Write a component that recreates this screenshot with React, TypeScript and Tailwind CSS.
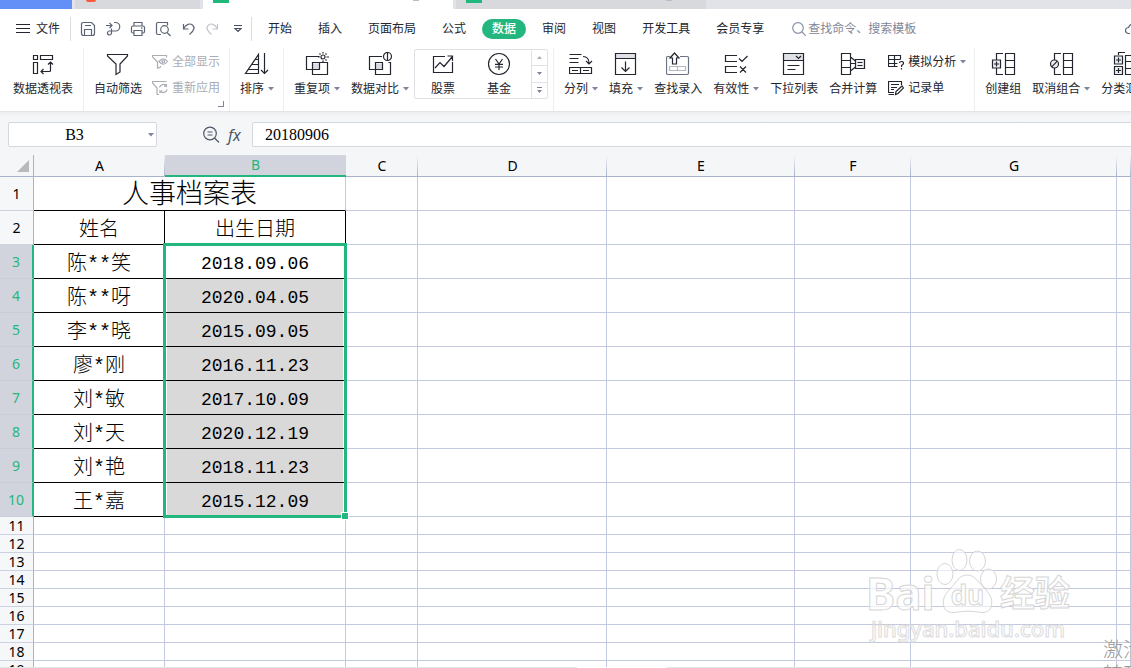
import { ReactNode } from "react";
import clsx from "clsx";

const Svg = ({ w, h, className, children }: { w: number; h: number; className?: string; children: ReactNode }) => (
    <svg
        width={w}
        height={h}
        viewBox={`0 0 ${w} ${h}`}
        fill="none"
        stroke="currentColor"
        strokeWidth="1.2"
        className={clsx("shrink-0", className)}
        aria-hidden="true"
    >
        {children}
    </svg>
);

const Caret = () => (
    <svg width="6" height="4" viewBox="0 0 6 4" className="ml-1 shrink-0 fill-[#7d869c]" aria-hidden="true">
        <path d="M0 0h6L3 3.500z" />
    </svg>
);

/* ---------- quick access icons ---------- */

const SaveIcon = () => (
    <Svg w={16} h={16}>
        <path d="M1.500 3.500q0-2 2-2h8l3 3v8q0 2-2 2h-9q-2 0-2-2zM4.500 14.500v-6h7v6M5 4.500h6" />
    </Svg>
);
const ExportIcon = () => (
    <Svg w={16} h={16}>
        <path d="M1 4.500h6M4.500 2l2.500 2.500L4.500 7M9 1.500h1.500a4 4 0 0 1 0 8.500H4.500a2 2 0 1 0 2 2V7.500" />
    </Svg>
);
const PrintIcon = () => (
    <Svg w={16} h={16}>
        <path d="M4 5V1.500h8V5M4 12H3q-1.500 0-1.500-1.500v-4Q1.500 5 3 5h10q1.500 0 1.500 1.500v4Q14.500 12 13 12h-1M4 9.500h8v5H4zM11 7.200h1.500" />
    </Svg>
);
const PreviewIcon = () => (
    <Svg w={16} h={16}>
        <path d="M6 13.500H3q-1.500 0-1.500-1.500V3Q1.500 1.500 3 1.500h9.500v3M12 11.500l3.500 3.500" />
        <circle cx="9.500" cy="8.500" r="3.800" />
    </Svg>
);
const UndoIcon = ({ className }: { className?: string }) => (
    <Svg w={16} h={16} className={className}>
        <path d="M3.500 3v5h5M3.500 7.800C6 3 10 2 12.500 4s2 5.500-3 9.500" />
    </Svg>
);

/* ---------- ribbon icons ---------- */

const PivotIcon = () => (
    <Svg w={24} h={24}>
        <path d="M2.500 3.500h4v4h-4zM9.500 3.500h12v4h-12zM2.500 10.500h4v11h-4zM19.500 10v8.500q0 1-1 1H10M17 12.500l2.500-2.500 2.500 2.500M12.500 17L10 19.500l2.500 2.500" />
    </Svg>
);
const FilterIcon = () => (
    <Svg w={24} h={24}>
        <path d="M1.500 2.500h20v1.500l-7.500 8v8l-4 2.500V12l-8.500-8z" />
    </Svg>
);
const ShowAllIcon = () => (
    <Svg w={16} h={16}>
        <path d="M5.500 14.500V8L.5 3V1.500h14v2M5.500 14.500l3-1.500v-1" />
        <path d="M7 7.500q4.500-5.500 8.500 0q-4 5.500-8.500 0z" />
        <circle cx="11.300" cy="7.500" r="1.300" />
    </Svg>
);
const ReapplyIcon = () => (
    <Svg w={16} h={16}>
        <path d="M5 14.500V8L.5 3V1.500h14M5 14.500h2M7.500 7.500a4 4 0 0 1 7-1.500V4M14.500 6.200h-2.500M15 9.500a4 4 0 0 1-7 1.500v2M8 11h2.500" />
    </Svg>
);
const SortIcon = () => (
    <Svg w={26} h={24}>
        <path d="M14.500 2.500v19h-13zM11.200 7.500h3.300M8 12.500h6.500M4.800 17.500h9.700M20.500 1v20.500M17 18l3.500 3.500L24 18" />
    </Svg>
);
const DuplicateIcon = () => (
    <Svg w={26} h={24}>
        <path d="M8.500 11.500h7v6h-7z" fill="#d9dce3" stroke="none" />
        <path d="M15.500 4.500h-13v13h13V11M8.500 17.500v-7h15v12h-15v-5" />
        <circle cx="19" cy="5" r="2" />
        <path d="M19 0v1.500M19 8.500V10M14 5h1.500M22.500 5H25M15.500 1.500l1 1M22.500 1.500l-1 1M22.500 8.500l-1-1" />
    </Svg>
);
const CompareIcon = () => (
    <Svg w={26} h={24}>
        <path d="M8.500 11.500h7v6h-7z" fill="#d9dce3" stroke="none" />
        <path d="M15 4.500H2.500v13h13V11M16 10.500H8.500v12h15v-12h-2" />
        <circle cx="20.500" cy="4.500" r="4" />
        <path d="M20.500.5v8" />
    </Svg>
);
const StockIcon = () => (
    <Svg w={24} h={24}>
        <path d="M14 4.500H2.500v16h19V10M4 16l5-5.500 4 4L21.500 4.500M16.500 4h5v5" />
    </Svg>
);
const FundIcon = () => (
    <Svg w={24} h={24}>
        <circle cx="12" cy="12" r="10.500" />
        <path d="M8.500 7l3.500 5 3.500-5M12 12v6M8 12.300h8M8 15h8" />
    </Svg>
);
const SplitIcon = () => (
    <Svg w={24} h={24}>
        <path d="M.5 2.500h12M.5 6.500h9M.5 10.500h9M.5 15.500h22v6H.5zM3 18.500h6M11.500 15.500v6M14 18.500h6M14 4.500q6 0 6 7M17 9l3 3 3-3" />
    </Svg>
);
const FillIcon = () => (
    <Svg w={24} h={24}>
        <path d="M2 2h20v4.500H2z" fill="#dfe1e6" stroke="none" />
        <path d="M1.500 1.500h20v21h-20zM1.500 6.500h20M11.500 9.500v10M7.500 15.500l4 4 4-4" />
    </Svg>
);
const LookupIcon = () => (
    <Svg w={24} h={24}>
        <path d="M4 4.500H2q-1.500 0-1.500 1v15.500q0 1.500 1.500 1.500h19q1.500 0 1.500-1.500V5.500q0-1-1.500-1H14" stroke="#6b7282" />
        <path d="M3.500 14.500h16v4h-16zM11.500 14.500v4" stroke="#b4b8c1" />
        <path d="M8.500 1l4.500 5h-2.500v6h-4V6H4z" />
    </Svg>
);
const ValidIcon = () => (
    <Svg w={24} h={24}>
        <path d="M13 3.500H1.500v6H13M13 14.500H1.500v6H13M15 6.500l3 3L23.500 4M16 14.500l6 6M22 14.500l-6 6" />
    </Svg>
);
const DropListIcon = () => (
    <Svg w={24} h={24}>
        <path d="M2 2h20v6H2z" fill="#dfe1e6" stroke="none" />
        <path d="M1.500 1.500h20v21h-20zM1.500 8.500h20M14 4l2.500 2.500L19 4M5.500 13.500h12M5.500 17.500h8" />
    </Svg>
);
const MergeIcon = () => (
    <Svg w={26} h={24}>
        <path d="M1.500 1.500h9v21h-9zM1.500 8.500h9M1.500 15.500h9M10.500 5l5 4M10.500 11.500h5M10.500 19l5-4" />
        <path d="M15.500 7.500h9v9h-9z" fill="#eef0f3" />
        <path d="M17.500 10.500h5M17.500 13.500h5" />
    </Svg>
);
const WhatIfIcon = () => (
    <Svg w={16} h={16}>
        <path d="M9.500 12.500H.5v-11h12v4M.5 5.500h12M.5 9.500h9M6.500 1.500v11M11.500 9q0-1.500 2-1.500t2 1.500-2 2.500v1.500M13.500 14v1.500" />
    </Svg>
);
const FormIcon = () => (
    <Svg w={16} h={16}>
        <path d="M6 12.500H.5v-11h13V5M3 4.500h8M3 7.500h6M3 9.500h3M.5 14.500H6M7.500 14.500l.5-3L14 6l1.500 2L10 13.500z" />
    </Svg>
);
const GroupIcon = () => (
    <Svg w={26} h={24}>
        <path d="M13 1.500H6.500V8M6.500 16v6.500H13M15.500 1.500h9v21h-9zM15.500 8.500h9M15.500 15.500h9" />
        <path d="M2.500 8h8v8h-8z" fill="#eef0f3" />
        <path d="M6.500 9.500v5M4 12h5" />
    </Svg>
);
const UngroupIcon = () => (
    <Svg w={26} h={24}>
        <path d="M13 1.500H6.500V8M6.500 16v6.500H13M15.500 1.500h9v21h-9zM15.500 8.500h9M15.500 15.500h9" />
        <circle cx="6.500" cy="12" r="4" fill="#eef0f3" />
        <path d="M3.700 14.800l5.600-5.600" />
    </Svg>
);
const SubtotalIcon = () => (
    <Svg w={26} h={24}>
        <path d="M13 .5H6.500V3M13.500 3.500v19h8V3.500zM13.500 9.500h8M13.500 16.500h8" />
        <path d="M2.500 4h8v8h-8zM2.500 14.500h8v8h-8z" fill="#eef0f3" />
        <path d="M6.500 5.500v5M4 8h5M6.500 16v5M4 18.500h5" />
    </Svg>
);

/* ---------- ribbon pieces ---------- */

interface BigButtonProps {
    icon: ReactNode;
    label: string;
    caret?: boolean;
}

const BigButton = ({ icon, label, caret }: BigButtonProps) => (
    <button className="flex h-[51px] shrink-0 flex-col items-center justify-between pt-1">
        {icon}
        <span className="flex items-center leading-5">
            {label}
            {caret && <Caret />}
        </span>
    </button>
);

const SmallButton = ({ icon, label, caret, disabled }: BigButtonProps & { disabled?: boolean }) => (
    <button disabled={disabled} className="flex h-[26px] shrink-0 items-center gap-1 disabled:text-[#a9acb3]">
        {icon}
        <span className="flex items-center">
            {label}
            {caret && <Caret />}
        </span>
    </button>
);

const RibbonGroup = ({ className, children }: { className?: string; children: ReactNode }) => (
    <div className={clsx("relative flex shrink-0 border-r border-[#eceef1]", className ?? "gap-[11px] px-2.5")}>{children}</div>
);

/* ---------- sheet data ---------- */

const tabs = ["开始", "插入", "页面布局", "公式", "数据", "审阅", "视图", "开发工具", "会员专享"];

const columns = [
    { name: "A", width: "w-[131px]" },
    { name: "B", width: "w-[181px]" },
    { name: "C", width: "w-[72px]" },
    { name: "D", width: "w-[189px]" },
    { name: "E", width: "w-[188px]" },
    { name: "F", width: "w-[116px]" },
    { name: "G", width: "w-[206px]" },
    { name: "", width: "" },
];

const people = [
    ["陈**笑", "2018.09.06"],
    ["陈**呀", "2020.04.05"],
    ["李**晓", "2015.09.05"],
    ["廖*刚", "2016.11.23"],
    ["刘*敏", "2017.10.09"],
    ["刘*天", "2020.12.19"],
    ["刘*艳", "2018.11.23"],
    ["王*嘉", "2015.12.09"],
];

const emptyRows = [11, 12, 13, 14, 15, 16, 17, 18, 19];

const cell = "border-r border-b border-[#c3c9de] p-0";
const filled = "border-r border-b border-black p-0 pt-1.5 text-center font-light text-xl leading-[27px]";

const RowHead = ({ n, selected }: { n: number; selected?: boolean }) => (
    <th
        scope="row"
        className={clsx(
            "border-b p-0 text-center font-['Noto_Sans'] text-sm leading-4 font-normal",
            selected
                ? "border-r-2 border-r-[#23b77f] border-b-[#c9cdd9] bg-[#d1d4dc] text-[#23b77f]"
                : "border-r border-r-[#a9b3cc] border-b-[#cdd2e0] bg-[#f5f7f8]"
        )}
    >
        {n}
    </th>
);

const Blank = ({ count }: { count: number }) => (
    <>
        {Array.from({ length: count }, (_, i) => (
            <td key={i} className={cell} />
        ))}
    </>
);

const Sheet = () => (
    <table className="w-full table-fixed border-separate border-spacing-0 bg-white text-black">
        <colgroup>
            <col className="w-[34px]" />
            {columns.map((c, i) => (
                <col key={i} className={c.width} />
            ))}
        </colgroup>
        <thead>
            <tr className="h-[22px] bg-[#f5f6f8]">
                <td className="border-r border-b border-[#a9b3cc] p-0">
                    <svg width="12" height="12" viewBox="0 0 12 12" className="ml-auto mr-1 fill-[#b9babd]" aria-hidden="true">
                        <path d="M12 0v12H0z" />
                    </svg>
                </td>
                {columns.map((c, i) => (
                    <th
                        key={i}
                        scope="col"
                        className={clsx(
                            "p-0 font-['Noto_Sans'] text-sm leading-5 font-normal",
                            c.name === "B"
                                ? "border-b-2 border-[#23b77f] bg-[#d1d4dc] text-[#23b77f]"
                                : "border-b border-[#a9b3cc] bg-[linear-gradient(to_bottom,transparent,#a9b3cc)] bg-[length:1px_100%] bg-right bg-no-repeat"
                        )}
                    >
                        {c.name}
                    </th>
                ))}
            </tr>
        </thead>
        <tbody>
            <tr className="h-[34px]">
                <RowHead n={1} />
                <td colSpan={2} className="border-r border-b border-r-[#c3c9de] border-b-black p-0 pt-1.5 text-center text-[27px] leading-[27px] font-light">
                    人事档案表
                </td>
                <Blank count={6} />
            </tr>
            <tr className="h-[34px]">
                <RowHead n={2} />
                <td className={filled}>姓名</td>
                <td className={filled}>出生日期</td>
                <Blank count={6} />
            </tr>
            {people.map(([name, date], i) => (
                <tr key={name} className="h-[34px]">
                    <RowHead n={i + 3} selected />
                    <td className={filled}>{name}</td>
                    <td
                        className={clsx(
                            "relative border-r border-b border-black p-0 pt-1 text-center text-lg leading-7",
                            i > 0 && "bg-[#d9d9d9] shadow-[inset_2px_0_white,inset_-2px_0_white]"
                        )}
                    >
                        {date}
                        {/* selection frame, runs down over B3:B10 */}
                        {i === 0 && (
                            <div className="pointer-events-none absolute -top-0.5 -right-0.5 -left-0.5 z-10 h-[275px] border-3 border-[#23b77f]">
                                <span className="absolute -right-1 -bottom-1 size-1.5 bg-[#23b77f] outline outline-white" />
                            </div>
                        )}
                    </td>
                    <Blank count={6} />
                </tr>
            ))}
            {emptyRows.map((n) => (
                <tr key={n} className="h-[18px]">
                    <RowHead n={n} />
                    <Blank count={8} />
                </tr>
            ))}
        </tbody>
    </table>
);

const Watermark = () => (
    <div className="pointer-events-none absolute right-[61px] bottom-[26px] z-20 w-[204px] text-white/70">
        <div className="flex h-[54px] items-end justify-between font-['Noto_Sans','Noto_Sans_CJK_SC',sans-serif] font-bold [-webkit-text-stroke:1px_#d6d6d6]">
            <span className="text-[44px] leading-[42px]">Bai</span>
            <span className="relative size-[62px]">
                <svg width="62" height="66" viewBox="0 0 62 66" className="absolute bottom-0 fill-white/60 stroke-[#d6d6d6]" aria-hidden="true">
                    <ellipse cx="9" cy="26" rx="8" ry="10.500" />
                    <ellipse cx="23.500" cy="12" rx="7.500" ry="10.500" />
                    <ellipse cx="41.500" cy="13" rx="8" ry="10" />
                    <ellipse cx="52.500" cy="31" rx="8" ry="10" />
                    <path d="M31 27c8 0 12 8 18 14s8 12 6 18-8 6-13 5-15-1-20 0-12 1-14-5 0-12 6-18 9-14 17-14z" />
                </svg>
                <span className="absolute inset-x-0 bottom-0 text-center text-[26px] leading-[38px]">du</span>
            </span>
            <span className="text-[35px] leading-[42px]">经验</span>
        </div>
        <div className="text-center font-['Noto_Sans'] text-[22px] leading-7 font-medium [-webkit-text-stroke:1px_#dcdcdc]">
            jingyan.baidu.com
        </div>
    </div>
);

const TabStrip = () => (
    <div className="flex h-[9px] shrink-0 gap-[3px] bg-[#e1e3e8]">
        <div className="w-[72px] bg-[#6390f7]" />
        <div className="w-[125px] bg-[#d8d9dd] pl-[11px]">
            <div className="h-0.5 w-2.5 rounded-b-full bg-[#fa5a3c]" />
        </div>
        <div className="flex w-[250px] justify-between bg-white pr-[34px] pl-2.5">
            <div className="h-[3px] w-4 bg-[#1fb87d]" />
            <div className="h-px w-1.5 bg-[#b6bdce]" />
        </div>
        <div className="flex w-[250px] justify-between bg-[#d8d9dd] pr-[34px] pl-2.5">
            <div className="h-[3px] w-4 bg-[#1fb87d]" />
            <div className="h-px w-1.5 bg-[#b6bdce]" />
        </div>
    </div>
);

const MenuBar = () => (
    <nav className="flex h-[37px] shrink-0 items-center overflow-hidden bg-white pt-0.5">
        <button className="ml-4 flex shrink-0 items-center gap-1.5">
            <Svg w={14} h={12}>
                <path d="M0 1.500h14M0 5.500h14M0 9.500h14" />
            </Svg>
            文件
        </button>
        <div className="ml-2.5 h-6 w-px shrink-0 bg-[#dcdee3]" />
        <div className="ml-[9px] flex shrink-0 items-center gap-[9px] text-[#5d6475]">
            <button aria-label="保存"><SaveIcon /></button>
            <button aria-label="输出"><ExportIcon /></button>
            <button aria-label="打印"><PrintIcon /></button>
            <button aria-label="打印预览"><PreviewIcon /></button>
            <button aria-label="撤消"><UndoIcon /></button>
            <button aria-label="恢复" disabled className="text-[#c2c5cc]"><UndoIcon className="-scale-x-100" /></button>
        </div>
        <button aria-label="更多" className="ml-3 shrink-0 text-[#4a5060]">
            <Svg w={10} h={8}>
                <path d="M1 .5h8M2 3.500h6L5 6.500z" />
            </Svg>
        </button>
        <div className="ml-2 h-6 w-px shrink-0 bg-[#dcdee3]" />
        <div className="ml-1.5 flex shrink-0 gap-1.5">
            {tabs.map((t) => (
                <button key={t} className={clsx("h-5 rounded-full px-2.5", t === "数据" && "bg-[#23b77f] font-medium text-white")}>
                    {t}
                </button>
            ))}
        </div>
        <label className="ml-[18px] flex shrink-0 items-center gap-0.5 text-[#8a93a8]">
            <Svg w={14} h={14}>
                <circle cx="6" cy="6" r="5.300" />
                <path d="M10 10l4 4" />
            </Svg>
            <input aria-label="查找" placeholder="查找命令、搜索模板" className="w-32 outline-none placeholder:text-[#7f8799]" />
        </label>
        <Svg w={16} h={12} className="-mr-2.5 ml-auto text-[#5d6475]">
            <path d="M5 10.500H3.500a3 3 0 0 1 0-6Q5 1 8 1t4.500 3.500" />
        </Svg>
    </nav>
);

const Ribbon = () => (
    <div className="flex h-[66px] shrink-0 overflow-hidden border-b border-[#e3e5e9] bg-white pl-[3px] *:mt-0.5">
        <RibbonGroup>
            <BigButton icon={<PivotIcon />} label="数据透视表" />
        </RibbonGroup>
        <RibbonGroup className="gap-2.5 pr-[9px] pl-2.5">
            <BigButton icon={<FilterIcon />} label="自动筛选" />
            <div className="pt-px">
                <SmallButton icon={<ShowAllIcon />} label="全部显示" disabled />
                <SmallButton icon={<ReapplyIcon />} label="重新应用" disabled />
            </div>
            <span className="absolute right-[5px] bottom-1 size-1.5 border-r border-b border-[#7d869c]" />
        </RibbonGroup>
        <RibbonGroup className="pr-[9px] pl-2.5">
            <BigButton icon={<SortIcon />} label="排序" caret />
        </RibbonGroup>
        <RibbonGroup className="gap-[11px] pr-[5px] pl-2.5">
            <BigButton icon={<DuplicateIcon />} label="重复项" caret />
            <BigButton icon={<CompareIcon />} label="数据对比" caret />
            <div className="-ml-1.5 mt-px flex h-[50px] w-[134px] rounded-xs border border-[#dfe1e6]">
                <div className="-mt-0.5 flex flex-1 justify-around pr-1">
                    <BigButton icon={<StockIcon />} label="股票" />
                    <BigButton icon={<FundIcon />} label="基金" />
                </div>
                <div className="flex w-4 flex-col divide-y divide-[#dfe1e6] border-l border-[#dfe1e6] *:flex *:flex-1 *:items-center *:justify-center">
                    <button aria-label="上一行">
                        <svg width="5" height="3" className="fill-[#a9afbd]"><path d="M0 3h5L2.500 0z" /></svg>
                    </button>
                    <button aria-label="下一行">
                        <svg width="5" height="3" className="fill-[#7d869c]"><path d="M0 0h5L2.500 3z" /></svg>
                    </button>
                    <button aria-label="展开">
                        <svg width="5" height="6" className="fill-[#7d869c]"><path d="M0 0h5v1H0zM0 3h5L2.500 6z" /></svg>
                    </button>
                </div>
            </div>
        </RibbonGroup>
        <RibbonGroup className="gap-[11px] pr-2 pl-2.5">
            <BigButton icon={<SplitIcon />} label="分列" caret />
            <BigButton icon={<FillIcon />} label="填充" caret />
            <BigButton icon={<LookupIcon />} label="查找录入" />
            <BigButton icon={<ValidIcon />} label="有效性" caret />
            <BigButton icon={<DropListIcon />} label="下拉列表" />
            <BigButton icon={<MergeIcon />} label="合并计算" />
            <div className="pt-px">
                <SmallButton icon={<WhatIfIcon />} label="模拟分析" caret />
                <SmallButton icon={<FormIcon />} label="记录单" />
            </div>
        </RibbonGroup>
        <RibbonGroup>
            <BigButton icon={<GroupIcon />} label="创建组" />
            <BigButton icon={<UngroupIcon />} label="取消组合" caret />
            <BigButton icon={<SubtotalIcon />} label="分类汇总" />
        </RibbonGroup>
    </div>
);

const FormulaBar = () => (
    <div className="flex h-[43px] shrink-0 items-center bg-linear-to-b from-[#eceef1] to-[#f5f6f8] to-10% pt-1 pb-0.5 pl-2">
        <div className="flex h-[25px] w-[149px] shrink-0 items-center rounded-xs border border-[#d5d8df] bg-white pr-0.5">
            <input aria-label="名称框" defaultValue="B3" className="w-full min-w-0 pr-1 text-center font-['Liberation_Serif'] text-base text-black outline-none" />
            <Caret />
        </div>
        <div className="ml-[45px] flex shrink-0 items-center gap-2 text-[#4f5667]">
            <Svg w={18} h={18}>
                <circle cx="8" cy="7.500" r="6.300" />
                <path d="M12.500 12l4.500 4.500M5.500 6h5M5.500 9h5" />
            </Svg>
            <span className="w-4 font-['Noto_Sans'] text-base italic">fx</span>
        </div>
        <input
            aria-label="编辑栏"
            defaultValue="20180906"
            className="ml-2 h-[25px] min-w-0 flex-1 rounded-l-xs border border-r-0 border-[#d5d8df] bg-white pl-3 font-['Liberation_Serif'] text-base text-black outline-none"
        />
    </div>
);

export default function App() {
    return (
        <div className="relative flex h-screen flex-col overflow-hidden bg-white font-['Liberation_Sans','Noto_Sans_CJK_SC',sans-serif] text-xs text-[#23262f]">
            <TabStrip />
            <MenuBar />
            <Ribbon />
            <FormulaBar />
            <main className="min-h-0 flex-1 overflow-hidden font-['Liberation_Mono','Noto_Sans_CJK_SC',monospace]">
                <Sheet />
            </main>
            <footer className="flex h-px shrink-0 justify-between bg-white">
                <div className="w-[51%] bg-[#e3e4e6]" />
                <div className="w-[41%] bg-[#e3e4e6]" />
            </footer>
            <Watermark />
            <div className="absolute right-0 -bottom-5 z-20 w-7 overflow-hidden text-xl leading-[25px] font-light whitespace-nowrap text-[#999]">
                <p>激活</p>
                <p>转到</p>
            </div>
        </div>
    );
}
